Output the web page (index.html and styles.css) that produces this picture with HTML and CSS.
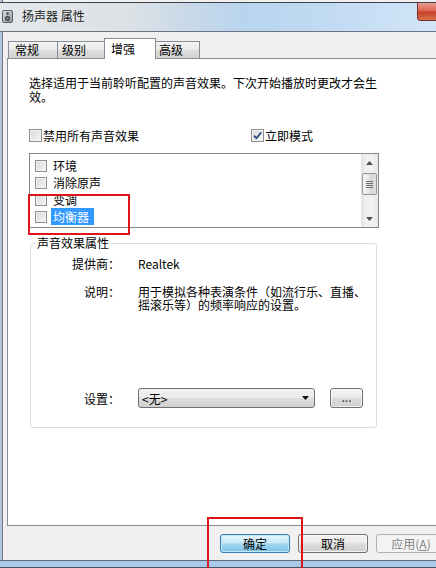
FILE: index.html
```html
<!DOCTYPE html>
<html lang="zh-CN">
<head>
  <meta charset="UTF-8">
  <meta name="viewport" content="width=device-width, initial-scale=1.0">
  <title>扬声器 属性</title>
  <link rel="stylesheet" href="styles.css">
</head>
<body>
  <div class="screen">
    <div class="window">
      <!-- 标题栏 -->
      <div class="titlebar">
        <svg class="title_icon" width="11" height="13" viewBox="0 0 11 13">
          <defs>
            <linearGradient id="spk" x1="0" y1="0" x2="1" y2="1">
              <stop offset="0" stop-color="#e2e5e8"/>
              <stop offset="1" stop-color="#8d949b"/>
            </linearGradient>
          </defs>
          <rect x="0.5" y="0.5" width="10" height="12" rx="1.5" fill="url(#spk)" stroke="#5a6067"/>
          <circle cx="5.5" cy="3.6" r="1.3" fill="#4b5056"/>
          <circle cx="5.5" cy="8.4" r="2.6" fill="#4b5056"/>
          <circle cx="5.5" cy="8.4" r="1" fill="#9aa0a6"/>
        </svg>
        <span class="title_text">扬声器 属性</span>
        <div class="title_close"></div>
      </div>

      <div class="client">
        <!-- 选项卡 -->
        <div class="tabs">
          <div class="tab tab_1">常规</div>
          <div class="tab tab_2">级别</div>
          <div class="tab tab_active">增强</div>
          <div class="tab tab_4">高级</div>
        </div>

        <div class="panel">
          <p class="intro">选择适用于当前聆听配置的声音效果。下次开始播放时更改才会生效。</p>

          <div class="option_row">
            <label class="option option_left"><span class="check"></span>禁用所有声音效果</label>
            <label class="option">
              <span class="check">
                <svg width="11" height="11" viewBox="0 0 11 11"><path d="M2 5.6 L4.4 8.2 L9.2 2.4" fill="none" stroke="#2f4586" stroke-width="1.7"/></svg>
              </span>立即模式
            </label>
          </div>

          <!-- 效果列表 -->
          <div class="effect_list">
            <ul class="effect_items">
              <li class="effect_item"><span class="check check_small"></span><span class="effect_name">环境</span></li>
              <li class="effect_item"><span class="check check_small"></span><span class="effect_name">消除原声</span></li>
              <li class="effect_item"><span class="check check_small"></span><span class="effect_name">变调</span></li>
              <li class="effect_item"><span class="check check_small"></span><span class="effect_name selected">均衡器</span></li>
              <li class="effect_item"><span class="check check_small"></span><span class="effect_name">虚拟环绕声</span></li>
            </ul>
            <div class="scrollbar">
              <span class="scroll_btn">
                <svg width="7" height="4" viewBox="0 0 7 4"><polygon points="3.5,0 7,4 0,4" fill="#505050"/></svg>
              </span>
              <span class="scroll_thumb"><i></i><i></i><i></i><i></i></span>
              <span class="scroll_btn scroll_down">
                <svg width="7" height="4" viewBox="0 0 7 4"><polygon points="0,0 7,0 3.5,4" fill="#505050"/></svg>
              </span>
            </div>
          </div>

          <!-- 声音效果属性 -->
          <div class="group">
            <div class="legend">声音效果属性</div>
            <div class="prop_grid">
              <span class="prop_label">提供商：</span>
              <span>Realtek</span>
              <span class="prop_label">说明：</span>
              <span class="prop_desc">用于模拟各种表演条件（如流行乐、直播、<br>摇滚乐等）的频率响应的设置。</span>
            </div>
            <div class="setting_row">
              <span class="prop_label">设置：</span>
              <div class="select">
                <span>&lt;无&gt;</span>
                <svg width="7" height="4" viewBox="0 0 7 4"><polygon points="0,0 7,0 3.5,4" fill="#111"/></svg>
              </div>
              <div class="btn btn_small">...</div>
            </div>
          </div>
        </div>

        <div class="buttons">
          <div class="btn btn_default">确定</div>
          <div class="btn">取消</div>
          <div class="btn btn_disabled">应用(<u>A</u>)</div>
        </div>
      </div>

      <div class="frame_bottom"></div>
    </div>

    <!-- 标注框 -->
    <div class="mark mark_list"></div>
    <div class="mark mark_ok"></div>
  </div>
</body>
</html>
```

FILE: styles.css
```css
body {
  margin: 0;
  font-family: "Noto Sans CJK SC", "Microsoft YaHei", sans-serif;
  font-size: 12px;
  color: #000;
}
.screen {
  position: relative;
  width: 436px;
  height: 568px;
  overflow: hidden;
  background: #f0f0f0;
}
.window {
  width: 446px;
  height: 568px;
  padding-top: 2px;
  box-sizing: border-box;
  display: flex;
  flex-direction: column;
  background: #f0f0f0;
  box-shadow: inset 2px 0 0 #b3c6d9, inset 3px 0 0 #6f7984;
}

/* 标题栏 */
.titlebar {
  height: 28px;
  display: flex;
  align-items: flex-start;
  padding-left: 2px;
  border-top: 1px solid #3e434a;
  border-bottom: 1px solid #6b7480;
  background: linear-gradient(to right, #e4e7ea 0%, #dde2e6 28%, #c9d9e8 42%, #b8d4ef 55%, #c4dcf4 78%, #d4e6f8 100%);
}
.title_icon {
  margin-top: 7px;
  flex: none;
}
.title_text {
  margin: 6px 0 0 9px;
  line-height: 14px;
  color: #1a1a1a;
}
.title_close {
  margin-left: auto;
  width: 29px;
  height: 18px;
  box-sizing: border-box;
  border: 1px solid #7a2c22;
  border-top: none;
  border-radius: 0 0 0 4px;
  background: linear-gradient(#eba093, #d8664f 45%, #c63f27 55%, #d9734f);
}

/* 主体 */
.client {
  flex: 1;
  padding-left: 7px;
  display: flex;
  flex-direction: column;
}
.tabs {
  margin-top: 6px;
  height: 20px;
  padding-left: 1px;
  display: flex;
  align-items: flex-end;
}
.tab {
  height: 17px;
  box-sizing: border-box;
  border: 1px solid #898c95;
  border-bottom: none;
  line-height: 16px;
  background: linear-gradient(#f3f3f3, #ebebeb 48%, #dddddd 52%, #d2d2d2);
}
.tab_1 {
  width: 50px;
  padding-left: 6px;
}
.tab_2 {
  width: 48px;
  margin-left: -1px;
  padding-left: 4px;
}
.tab_4 {
  width: 45px;
  margin-left: -1px;
  padding-left: 3px;
}
.tab_active {
  position: relative;
  z-index: 1;
  width: 52px;
  height: 21px;
  margin: 0 0 -1px -1px;
  padding-left: 6px;
  line-height: 19px;
  background: #fff;
}
.panel {
  width: 439px;
  height: 468px;
  box-sizing: border-box;
  border: 1px solid #898c95;
  background: #fff;
  padding: 17px 0 0 21px;
}
.intro {
  margin: 0;
  width: 350px;
  line-height: 14px;
}

/* 复选框 */
.option_row {
  margin-top: 25px;
  height: 13px;
  display: flex;
  align-items: center;
}
.option {
  display: flex;
  align-items: center;
  line-height: 14px;
}
.option_left {
  width: 222px;
}
.check {
  flex: none;
  width: 13px;
  height: 13px;
  margin-right: 1px;
  box-sizing: border-box;
  border: 1px solid #8e8f8f;
  background: linear-gradient(135deg, #d6d8db, #f6f6f6);
  box-shadow: inset 0 0 0 1px #f3f3f3;
  display: flex;
  align-items: center;
  justify-content: center;
}
.check_small {
  width: 12px;
  height: 12px;
  margin-right: 4px;
}

/* 列表 */
.effect_list {
  margin-top: 11px;
  width: 350px;
  height: 75px;
  box-sizing: border-box;
  border: 1px solid #828790;
  display: flex;
}
.effect_items {
  flex: 1;
  margin: 0;
  padding: 3px 0 0 5px;
  list-style: none;
  overflow: hidden;
}
.effect_item {
  height: 17px;
  display: flex;
  align-items: center;
}
.effect_name {
  padding: 0 5px 0 2px;
  line-height: 17px;
}
.selected {
  background: #3399ff;
  color: #fff;
}
.scrollbar {
  width: 17px;
  display: flex;
  flex-direction: column;
  background: linear-gradient(to right, #e2e2e2, #f1f1f1 30%, #f1f1f1 70%, #e6e6e6);
}
.scroll_btn {
  height: 17px;
  display: flex;
  align-items: center;
  justify-content: center;
}
.scroll_down {
  margin-top: auto;
}
.scroll_thumb {
  margin: 2px 1px 0;
  height: 22px;
  box-sizing: border-box;
  border: 1px solid #979797;
  border-radius: 2px;
  background: linear-gradient(to right, #f4f4f4, #e6e6e6 50%, #d6d6d6 50%, #dedede);
  display: flex;
  flex-direction: column;
  align-items: center;
  justify-content: center;
  gap: 1px;
}
.scroll_thumb i {
  width: 7px;
  height: 1px;
  background: #6e6e6e;
}

/* 属性分组 */
.group {
  margin: 15px 0 0 1px;
  width: 347px;
  height: 185px;
  box-sizing: border-box;
  border: 1px solid #d9dde0;
  border-radius: 3px;
}
.legend {
  width: fit-content;
  margin: -8px 0 0 5px;
  padding: 0 1px;
  line-height: 14px;
  background: #fff;
}
.prop_grid {
  margin-top: 7px;
  display: grid;
  grid-template-columns: 89px 1fr;
  column-gap: 18px;
  row-gap: 14px;
  line-height: 14px;
}
.prop_label {
  text-align: right;
}
.prop_desc {
  line-height: 13px;
}
.setting_row {
  margin-top: 77px;
  height: 20px;
  display: flex;
  align-items: center;
}
.setting_row .prop_label {
  width: 89px;
  margin-right: 18px;
}
.select {
  width: 177px;
  height: 20px;
  box-sizing: border-box;
  border: 1px solid #707070;
  border-radius: 3px;
  padding: 0 5px 0 3px;
  display: flex;
  align-items: center;
  justify-content: space-between;
  background: linear-gradient(#f2f2f2, #ebebeb 48%, #dddddd 52%, #d0d0d0);
}

/* 按钮 */
.btn {
  width: 73px;
  height: 19px;
  box-sizing: border-box;
  border: 1px solid #707070;
  border-radius: 3px;
  text-align: center;
  line-height: 17px;
  background: linear-gradient(#f3f3f3, #ebebeb 45%, #dddddd 52%, #cfcfcf);
  box-shadow: inset 0 0 0 1px rgba(255, 255, 255, 0.7);
}
.btn_small {
  width: 33px;
  height: 20px;
  margin-left: 15px;
  color: #333;
  line-height: 16px;
}
.btn_default {
  border-color: #3c7fb1;
  background: linear-gradient(#e6f5fd, #c9e8f8 45%, #a4d8f3 52%, #79c0e6);
  box-shadow: inset 0 0 0 1px #bfe7fa;
}
.btn_disabled {
  border-color: #adb2b5;
  background: #f4f4f4;
  box-shadow: none;
  color: #838383;
}
.buttons {
  height: 34px;
  box-sizing: border-box;
  padding: 8px 0 0 213px;
  display: flex;
  gap: 8px;
}
.frame_bottom {
  height: 8px;
  box-sizing: border-box;
  border-top: 1px solid #5f6a77;
  border-bottom: 1px solid #4a5360;
  background: #a9c9ea;
}

/* 标注 */
.mark {
  position: absolute;
  border: 2px solid #dd1419;
  box-sizing: border-box;
}
.mark_list {
  left: 28px;
  top: 194px;
  width: 102px;
  height: 41px;
}
.mark_ok {
  left: 207px;
  top: 517px;
  width: 96px;
  height: 60px;
}
```
